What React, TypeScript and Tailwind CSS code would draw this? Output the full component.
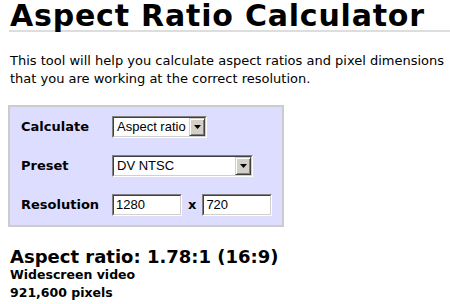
import React from "react";

function Arrow() {
  return (
    <div className="flex h-full w-[16px] items-center justify-center border-t border-l border-b border-r border-t-[#d4d0c8] border-l-[#d4d0c8] border-b-[#404040] border-r-[#404040] bg-[#d4d0c8] shadow-[inset_1px_1px_0_#fff,inset_-1px_-1px_0_#808080]">
      <svg width="7" height="4" viewBox="0 0 7 4">
        <polygon points="0,0 7,0 3.5,4" fill="#000" />
      </svg>
    </div>
  );
}

function Select({ value, width }: { value: string; width: string }) {
  return (
    <div className={`${width} flex h-[22px] border border-t-[#808080] border-l-[#808080] border-b-white border-r-white bg-white`}>
      <div className="flex min-w-0 flex-1 border border-t-[#404040] border-l-[#404040] border-b-[#d4d0c8] border-r-[#d4d0c8] bg-white">
        <div className="flex-1 truncate pl-[3px] font-['Liberation_Sans',Arial,sans-serif] text-[13px] leading-[18px] text-black">
          {value}
        </div>
        <Arrow />
      </div>
    </div>
  );
}

function Input({ value }: { value: string }) {
  return (
    <div className="flex h-[22px] w-[70px] border border-t-[#808080] border-l-[#808080] border-b-white border-r-white bg-white">
      <div className="flex-1 border border-t-[#404040] border-l-[#404040] border-b-[#d4d0c8] border-r-[#d4d0c8] bg-white pl-[2px] font-['Liberation_Sans',Arial,sans-serif] text-[13px] leading-[18px] text-black">
        {value}
      </div>
    </div>
  );
}

export default function App() {
  return (
    <div className="h-[304px] w-[450px] overflow-hidden bg-white font-['DejaVu_Sans',Verdana,sans-serif] text-black">
      <h1 className="ml-[9px] whitespace-nowrap border-b-2 border-[#dddddd] pl-[1px] pt-[2px] text-[30px] font-bold leading-[28px] tracking-[0.8px]">
        Aspect Ratio Calculator
      </h1>
      <p className="ml-[10px] mt-[20px] whitespace-nowrap text-[13px] leading-[18px]">
        This tool will help you calculate aspect ratios and pixel dimensions
        <br />
        that you are working at the correct resolution.
      </p>
      <div className="ml-[8px] mt-[17px] flex h-[122px] w-[276px] flex-col border-2 border-[#cccccc] bg-[#ddddff] pl-[11px] pt-[9px]">
        <div className="flex h-[22px] items-center">
          <div className="w-[91px] text-[13px] font-bold">Calculate</div>
          <Select value="Aspect ratio" width="w-[95px]" />
        </div>
        <div className="mt-[17px] flex h-[22px] items-center">
          <div className="w-[91px] text-[13px] font-bold">Preset</div>
          <Select value="DV NTSC" width="w-[141px]" />
        </div>
        <div className="mt-[17px] flex h-[22px] items-center">
          <div className="w-[91px] text-[13px] font-bold">Resolution</div>
          <Input value="1280" />
          <div className="mx-[6px] text-[13px] font-bold">x</div>
          <Input value="720" />
        </div>
      </div>
      <div className="ml-[10px] mt-[20px] text-[18px] font-bold leading-[19px]">
        Aspect ratio: 1.78:1 (16:9)
      </div>
      <div className="ml-[10px] text-[12.5px] font-bold leading-[18px]">Widescreen video</div>
      <div className="ml-[10px] text-[12.5px] font-bold leading-[18px]">921,600 pixels</div>
    </div>
  );
}
